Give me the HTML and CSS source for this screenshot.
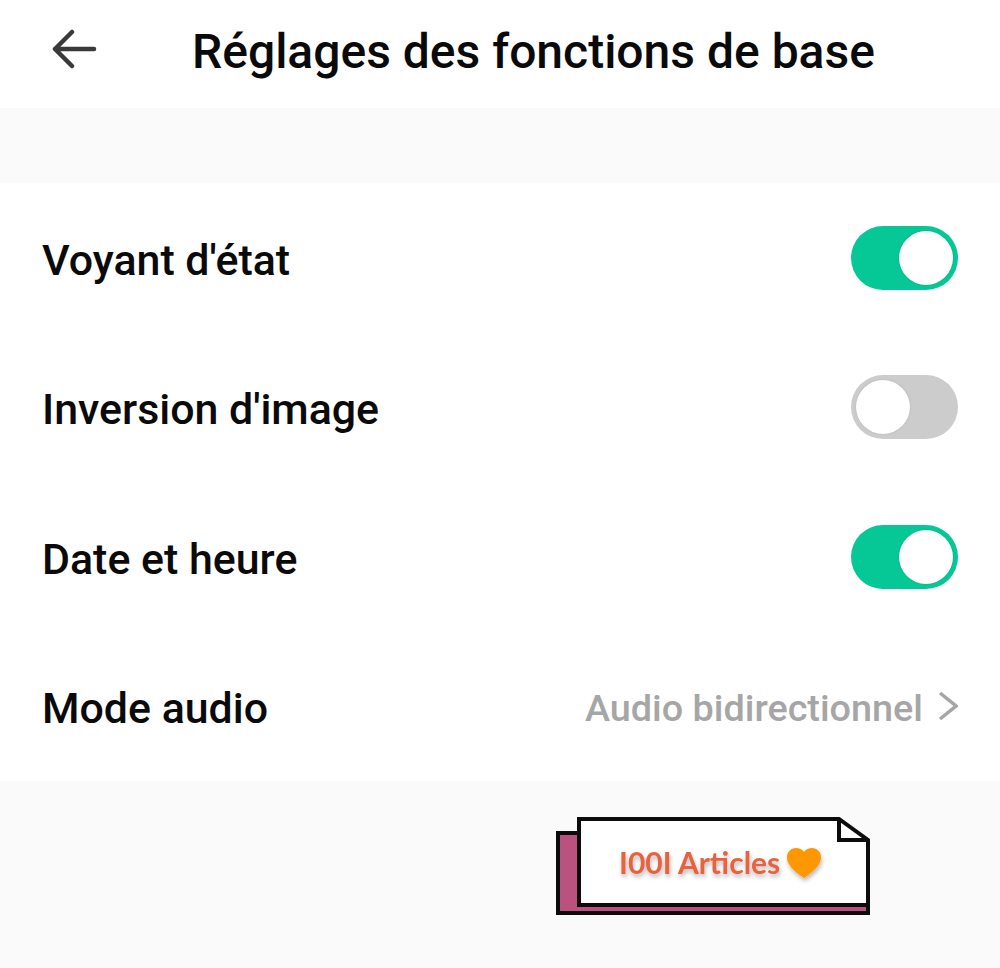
FILE: index.html
```html
<!DOCTYPE html>
<html lang="fr">
<head>
    <meta charset="UTF-8">
    <meta name="viewport" content="width=device-width, initial-scale=1.0">
    <title>Réglages des fonctions de base</title>
    <link rel="stylesheet" href="styles.css">
</head>
<body>
    <header class="topbar">
        <svg class="back-icon" width="46" height="44" viewBox="0 0 46 44">
            <path d="M43 20H4M21 3L4 20l17 17" fill="none" stroke="#3a3a3a" stroke-width="4.5" stroke-linecap="round" stroke-linejoin="round"/>
        </svg>
        <h1 class="title">Réglages des fonctions de base</h1>
    </header>

    <div class="spacer"></div>

    <main class="settings">
        <div class="row">
            <span class="label">Voyant d'état</span>
            <span class="switch on"></span>
        </div>
        <div class="row">
            <span class="label">Inversion d'image</span>
            <span class="switch"></span>
        </div>
        <div class="row">
            <span class="label">Date et heure</span>
            <span class="switch on"></span>
        </div>
        <div class="row">
            <span class="label">Mode audio</span>
            <span class="value">Audio bidirectionnel</span>
            <svg class="chevron" width="20" height="30" viewBox="0 0 20 30">
                <path d="M2 2l16 13L2 28" fill="none" stroke="#a6a6a6" stroke-width="3.5"/>
            </svg>
        </div>
    </main>

    <footer class="footer">
        <svg class="sticker" width="316" height="100" viewBox="0 0 316 100">
            <defs>
                <filter id="soft" x="-10%" y="-20%" width="125%" height="150%">
                    <feDropShadow dx="1" dy="3" stdDeviation="2" flood-color="#000" flood-opacity="0.28"/>
                </filter>
            </defs>
            <path d="M23 17H2V97H312V89H23Z" fill="#b9527f" stroke="#0c0c0c" stroke-width="4"/>
            <path d="M23 3H283L312 24V89H23Z" fill="#fff" stroke="#0c0c0c" stroke-width="4"/>
            <path d="M283 3V24H312" fill="none" stroke="#0c0c0c" stroke-width="4"/>
            <text class="sticker-text" x="63" y="58" filter="url(#soft)">I00I Articles</text>
            <path d="M248 62C238 55 231 49 231 41c0-5 4-9 9-9 3 0 6 1 8 4 2-3 5-4 8-4 5 0 9 4 9 9 0 8-7 14-17 21Z" fill="#ff9800" filter="url(#soft)"/>
        </svg>
    </footer>
</body>
</html>
```

FILE: styles.css
```css
body {
    font-family: Roboto, "Noto Sans", sans-serif;
    background: #fafafa;
    margin: 0;
    padding: 0;
    height: 968px;
    overflow: hidden;
}

.topbar {
    background: white;
    height: 108px;
    display: flex;
    align-items: center;
    padding-left: 51px;
    padding-bottom: 6px;
    box-sizing: border-box;
}

.back-icon {
    flex: none;
}

.title {
    margin: 0 0 0 95px;
    font-size: 48px;
    font-weight: 500;
    color: #0a0a0a;
    white-space: nowrap;
}

.spacer {
    height: 75px;
}

.settings {
    background: white;
    height: 598px;
    display: flex;
    flex-direction: column;
}

.row {
    flex: 1;
    display: flex;
    align-items: center;
    padding: 0 42px 0 42px;
}

.label {
    font-size: 42.9px;
    font-weight: 500;
    color: #0a0a0a;
    margin-top: 4px;
    margin-right: auto;
}

.value {
    font-size: 37.8px;
    font-weight: 500;
    color: #a6a6a6;
    margin-top: 4px;
}

.chevron {
    margin-left: 15px;
}

.switch {
    position: relative;
    width: 107px;
    height: 64px;
    border-radius: 32px;
    background: #cccccc;
}

.switch::after {
    content: "";
    position: absolute;
    top: 5px;
    left: 5px;
    width: 54px;
    height: 54px;
    border-radius: 50%;
    background: white;
    box-shadow: 0 0 2px rgba(0,0,0,0.15);
}

.switch.on {
    background: #06c897;
}

.switch.on::after {
    left: 48px;
}

.footer {
    padding: 35px 0 0 556px;
}

.sticker {
    display: block;
}

.sticker-text {
    font-family: Lato, sans-serif;
    font-size: 30px;
    font-weight: 700;
    fill: #e8623f;
}
```
